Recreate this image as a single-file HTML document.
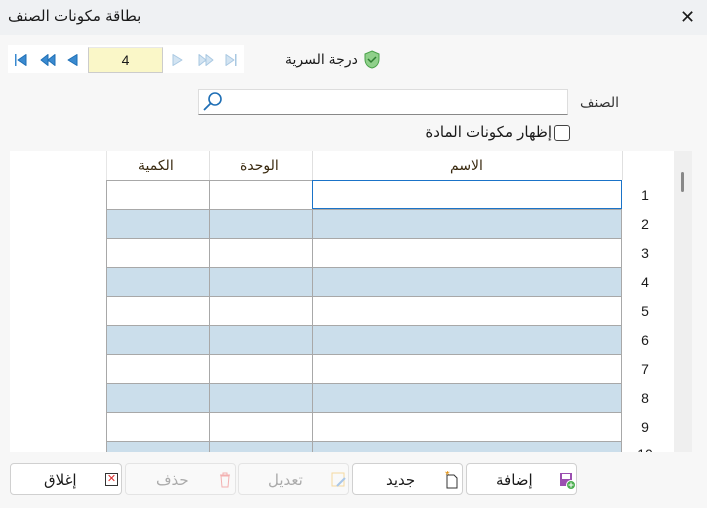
<!DOCTYPE html>
<html><head><meta charset="utf-8"><style>
body{margin:0;width:707px;height:508px;background:#f7f7f7;font-family:"Liberation Sans","DejaVu Sans",sans-serif;position:relative;overflow:hidden;color:#1a1a1a}
.a{position:absolute}
.t{font-size:14px;white-space:nowrap}
.btn{position:absolute;top:463px;height:32px;background:#fff;border:1px solid #d0d0d0;border-radius:4px;box-sizing:border-box;font-size:14px}
.dis{background:#f9f9f9;color:#aaa;border-color:#e4e4e4}
.row{position:absolute;left:106px;width:516px;height:29px;border-top:1px solid #a8a8a8}
.rn{position:absolute;left:630px;width:30px;text-align:center;font-size:14px}
</style></head><body>
<div class="a" style="left:0;top:0;width:707px;height:35px;background:#eff1f3"></div>
<div class="a t" style="left:8px;top:7px;font-size:15px">بطاقة مكونات الصنف</div>
<div class="a" style="left:680px;top:7px;font-size:18px">✕</div>

<div class="a" style="left:8px;top:45px;width:236px;height:28px;background:#fff"></div>
<svg class="a" style="left:12px;top:52px" width="230" height="16" viewBox="0 0 230 16">
<g fill="#3a8ad0" stroke="#1f6fb5" stroke-linejoin="round"><rect x="3" y="2" width="1.5" height="12" stroke="none"/><path d="M14 2.5v11l-8-5.5z"/><path d="M36 2.5v11l-7-5.5zM43 2.5v11l-7-5.5z"/><path d="M65 2.5v11l-9-5.5z"/></g>
<g fill="#d3e4f2" stroke="#a9c8e2" stroke-linejoin="round"><path d="M161 2.5v11l9-5.5z"/><path d="M187 2.5v11l7-5.5zM194 2.5v11l7-5.5z"/><path d="M214 2.5v11l8-5.5z"/><rect x="223" y="2" width="1.5" height="12" stroke="none" fill="#a9c8e2"/></g>
</svg>
<div class="a" style="left:88px;top:47px;width:73px;height:24px;background:#faf7c8;border:1px solid #ccc;border-top-color:#e8e8e8;text-align:center;line-height:24px;font-size:14px">4</div>
<div class="a t" style="left:285px;top:51px">درجة السرية</div>
<svg class="a" style="left:363px;top:50px" width="18" height="19" viewBox="0 0 18 19"><path d="M9 1l7 3v5c0 5-3 8-7 9C5 17 2 14 2 9V4z" fill="#8fd08a" stroke="#4aa24a"/><path d="M5 9l3 3 5-5" fill="none" stroke="#2e7d32" stroke-width="1.5"/></svg>

<div class="a" style="left:198px;top:89px;width:370px;height:26px;background:#fff;border:1px solid #ddd;border-bottom-color:#888;box-sizing:border-box"></div>
<svg class="a" style="left:201px;top:90px" width="24" height="24" viewBox="0 0 24 24"><circle cx="14" cy="9" r="6" fill="none" stroke="#1f6fb5" stroke-width="1.6"/><path d="M10 13l-7 7" stroke="#1f6fb5" stroke-width="1.8"/></svg>
<div class="a t" style="left:580px;top:94px;color:#333">الصنف</div>
<div class="a" style="left:554px;top:125px;width:14px;height:14px;border:1px solid #444;border-radius:3px;background:#fff"></div>
<div class="a t" style="right:155px;top:123px;font-size:15px">إظهار مكونات المادة</div>

<div class="a" style="left:10px;top:151px;width:664px;height:301px;background:#fff;overflow:hidden">
<div class="a" style="left:96px;top:0;width:1px;height:301px;background:#e6e6e6"></div>
<div class="a" style="left:199px;top:0;width:1px;height:29px;background:#e0e0e0"></div>
<div class="a" style="left:302px;top:0;width:1px;height:29px;background:#e0e0e0"></div>
<div class="a" style="left:612px;top:0;width:1px;height:29px;background:#e0e0e0"></div>
<div class="a t" style="left:128px;top:6px;color:#3a2a10">الكمية</div>
<div class="a t" style="left:230px;top:6px;color:#3a2a10">الوحدة</div>
<div class="a t" style="left:440px;top:6px;color:#3a2a10">الاسم</div>
</div>
<div class="a" style="left:674px;top:151px;width:18px;height:301px;background:#efefef"></div>
<div class="a" style="left:681px;top:172px;width:3px;height:20px;background:#888;border-radius:2px"></div>

<div class="a" style="left:0;top:180px;width:707px;height:272px;overflow:hidden">
<div class="row" style="top:0"></div>
<div class="row" style="top:29px;background:#cbdeeb"></div>
<div class="row" style="top:58px"></div>
<div class="row" style="top:87px;background:#cbdeeb"></div>
<div class="row" style="top:116px"></div>
<div class="row" style="top:145px;background:#cbdeeb"></div>
<div class="row" style="top:174px"></div>
<div class="row" style="top:203px;background:#cbdeeb"></div>
<div class="row" style="top:232px"></div>
<div class="row" style="top:261px;background:#cbdeeb"></div>
<div class="a" style="left:106px;top:0;width:1px;height:272px;background:#a8a8a8"></div>
<div class="a" style="left:209px;top:0;width:1px;height:272px;background:#a8a8a8"></div>
<div class="a" style="left:312px;top:0;width:1px;height:272px;background:#a8a8a8"></div>
<div class="a" style="left:621px;top:0;width:1px;height:272px;background:#a8a8a8"></div>
<div class="a" style="left:312px;top:0;width:310px;height:29px;border:1px solid #1a73c8;box-sizing:border-box"></div>
<div class="rn" style="top:7px">1</div><div class="rn" style="top:36px">2</div><div class="rn" style="top:65px">3</div><div class="rn" style="top:94px">4</div><div class="rn" style="top:123px">5</div><div class="rn" style="top:152px">6</div><div class="rn" style="top:181px">7</div><div class="rn" style="top:210px">8</div><div class="rn" style="top:239px">9</div><div class="rn" style="top:266px">10</div>
</div>

<div class="btn" style="left:10px;width:112px"><span class="a" style="left:33px;top:7px;font-size:15px">إغلاق</span><span class="a" style="left:94px;top:9px;width:11px;height:11px;border:1px solid #333;color:#d33;font-size:11px;line-height:11px;text-align:center">✕</span></div>
<div class="btn dis" style="left:125px;width:111px"><span class="a" style="left:30px;top:7px;font-size:15px">حذف</span><svg class="a" style="left:92px;top:8px" width="14" height="16"><path d="M2 3h10M5 3V1h4v2M3 4h8l-1 11H4z" fill="none" stroke="#f3b0b0"/></svg></div>
<div class="btn dis" style="left:238px;width:111px"><span class="a" style="left:29px;top:7px;font-size:15px">تعديل</span><svg class="a" style="left:92px;top:8px" width="16" height="16"><rect x="1" y="1" width="12" height="13" fill="none" stroke="#f5d9a0"/><path d="M6 14l8-8" stroke="#a9c6e8" stroke-width="2"/></svg></div>
<div class="btn" style="left:352px;width:111px"><span class="a" style="left:33px;top:7px;font-size:15px">جديد</span><svg class="a" style="left:92px;top:7px" width="14" height="18"><path d="M2 4h7l3 3v10H2z" fill="#fff" stroke="#333"/><text x="0" y="8" font-size="12" fill="#e08a00">*</text></svg></div>
<div class="btn" style="left:466px;width:111px"><span class="a" style="left:29px;top:7px;font-size:15px">إضافة</span><svg class="a" style="left:92px;top:8px" width="18" height="18"><rect x="1" y="1" width="12" height="13" fill="#9b4fb0"/><rect x="3" y="2" width="8" height="5" fill="#fff"/><circle cx="12" cy="13" r="4.5" fill="#4caf50" stroke="#fff"/><path d="M12 10.5v5M9.5 13h5" stroke="#fff"/></svg></div>
</body></html>
